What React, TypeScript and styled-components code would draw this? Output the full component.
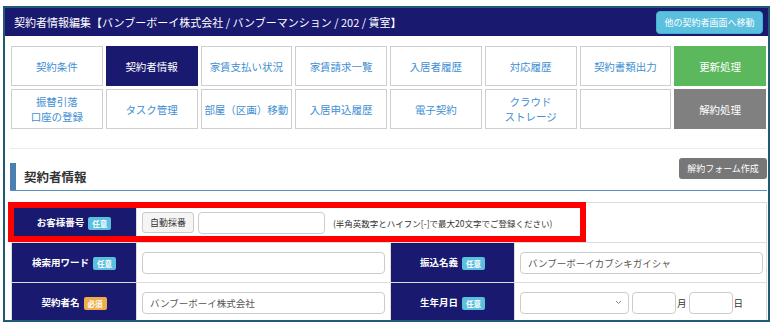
import styled, { createGlobalStyle, css } from "styled-components";

const GlobalStyle = createGlobalStyle`
    body {
        margin: 0;
        overflow: hidden;
        background: #fff;
        font-family: "Noto Sans CJK JP", "Noto Sans", sans-serif;
    }
`;

const Frame = styled.div`
    margin: 6px 0 0 3px;
    width: 767px;
    height: 316px;
    box-sizing: border-box;
    border: 2px solid #215a75;
    overflow: hidden;
    background: #fff;
`;

const Header = styled.div`
    height: 28px;
    display: flex;
    align-items: center;
    justify-content: space-between;
    padding: 0 5px 0 9px;
    background: #191970;
    color: #fff;
    font-size: 11px;
`;

const HeaderButton = styled.div`
    width: 107px;
    height: 23px;
    display: flex;
    align-items: center;
    justify-content: center;
    border-radius: 4px;
    background: #5bc0de;
    border: 1px solid #46b0d0;
    box-sizing: border-box;
    color: #fff;
    font-size: 9px;
`;

const Body = styled.div`
    padding: 10px 2px 0 6px;
`;

const TabGrid = styled.div`
    display: grid;
    grid-template-columns: repeat(8, 1fr);
    gap: 3px;
`;

type Tone = "default" | "active" | "success" | "muted" | "empty";

const Tab = styled.div<{ $tone: Tone }>`
    height: 40px;
    box-sizing: border-box;
    display: flex;
    align-items: center;
    justify-content: center;
    text-align: center;
    white-space: pre-line;
    font-size: 10.5px;
    line-height: 15px;
    border: 1px solid #cfcfcf;
    background: #fff;
    color: #3f8fd2;
    ${({ $tone }) =>
        $tone === "active" &&
        css`
            background: #191970;
            border-color: #191970;
            color: #fff;
        `}
    ${({ $tone }) =>
        $tone === "success" &&
        css`
            background: #5cb85c;
            border-color: #5cb85c;
            color: #fff;
        `}
    ${({ $tone }) =>
        $tone === "muted" &&
        css`
            background: #808080;
            border-color: #808080;
            color: #fff;
        `}
`;

const Divider = styled.div`
    margin: 19px 0 0 -1px;
    border-top: 1px solid #ebebeb;
`;

const SectionHead = styled.div`
    margin: 9px -1px 0 -1px;
    height: 32px;
    display: flex;
    justify-content: space-between;
    align-items: flex-start;
    border-bottom: 1px solid #5b8fc7;
`;

const SectionTitle = styled.h2`
    align-self: flex-end;
    margin: 0;
    height: 27px;
    display: flex;
    align-items: center;
    padding-left: 8px;
    border-left: 6px solid #4a7fb0;
    font-size: 12.5px;
    font-weight: bold;
    color: #333;
`;

const GrayButton = styled.div`
    width: 88px;
    height: 21px;
    display: flex;
    align-items: center;
    justify-content: center;
    border-radius: 3px;
    background: #777;
    color: #fff;
    font-size: 9px;
`;

const TableWrap = styled.div`
    position: relative;
    margin-top: 11px;
`;

const Table = styled.table`
    width: 755px;
    border-collapse: collapse;
    table-layout: fixed;
`;

const Row = styled.tr`
    height: 40px;
`;

const LabelCell = styled.th`
    padding: 0;
    background: #191970;
    border: 1px solid #dcdcdc;
    color: #fff;
    font-size: 9.5px;
    font-weight: bold;
    text-align: center;
`;

const ValueCell = styled.td`
    padding: 0 5px;
    border: 1px solid #dcdcdc;
    font-size: 9.5px;
    color: #333;
`;

const Badge = styled.span<{ $required?: boolean }>`
    display: inline-block;
    margin-left: 4px;
    padding: 0 4px;
    height: 13px;
    line-height: 13px;
    border-radius: 2px;
    vertical-align: middle;
    font-size: 7.5px;
    font-weight: bold;
    color: #fff;
    background: ${({ $required }) => ($required ? "#f0ad4e" : "#5bc0de")};
`;

const Inline = styled.div`
    display: flex;
    align-items: center;
`;

const SmallButton = styled.div`
    width: 52px;
    height: 21px;
    box-sizing: border-box;
    display: flex;
    align-items: center;
    justify-content: center;
    border: 1px solid #ccc;
    border-radius: 3px;
    background: #f5f5f5;
    font-size: 9px;
    color: #333;
`;

const Input = styled.div<{ $width: number }>`
    width: ${({ $width }) => $width}px;
    height: 22px;
    box-sizing: border-box;
    display: flex;
    align-items: center;
    padding: 0 7px;
    border: 1px solid #ccc;
    border-radius: 4px;
    background: #fff;
    font-size: 9.5px;
    color: #555;
`;

const Hint = styled.span`
    margin-left: 8px;
    font-size: 8.5px;
    color: #333;
`;

const SelectBox = styled(Input)`
    justify-content: flex-end;
    padding-right: 6px;
    color: #888;
`;

const Unit = styled.span`
    margin: 0 2px 0 1px;
    font-size: 9.5px;
    color: #333;
`;

const Highlight = styled.div`
    position: absolute;
    left: -3px;
    top: 0;
    width: 578px;
    height: 40px;
    box-sizing: border-box;
    border: 6px solid #ff0000;
    pointer-events: none;
`;

const tabs: { label: string; tone: Tone }[] = [
    { label: "契約条件", tone: "default" },
    { label: "契約者情報", tone: "active" },
    { label: "家賃支払い状況", tone: "default" },
    { label: "家賃請求一覧", tone: "default" },
    { label: "入居者履歴", tone: "default" },
    { label: "対応履歴", tone: "default" },
    { label: "契約書類出力", tone: "default" },
    { label: "更新処理", tone: "success" },
    { label: "振替引落\n口座の登録", tone: "default" },
    { label: "タスク管理", tone: "default" },
    { label: "部屋（区画）移動", tone: "default" },
    { label: "入居申込履歴", tone: "default" },
    { label: "電子契約", tone: "default" },
    { label: "クラウド\nストレージ", tone: "default" },
    { label: "", tone: "empty" },
    { label: "解約処理", tone: "muted" },
];

const Label = ({ text, required }: { text: string; required?: boolean }) => (
    <LabelCell>
        {text}
        <Badge $required={required}>{required ? "必須" : "任意"}</Badge>
    </LabelCell>
);

export default function App() {
    return (
        <>
            <GlobalStyle />
            <Frame>
                <Header>
                    <span>契約者情報編集【バンブーボーイ株式会社 / バンブーマンション / 202 / 賃室】</span>
                    <HeaderButton>他の契約者画面へ移動</HeaderButton>
                </Header>
                <Body>
                    <TabGrid>
                        {tabs.map((t, i) => (
                            <Tab key={i} $tone={t.tone}>
                                {t.label}
                            </Tab>
                        ))}
                    </TabGrid>
                    <Divider />
                    <SectionHead>
                        <SectionTitle>契約者情報</SectionTitle>
                        <GrayButton>解約フォーム作成</GrayButton>
                    </SectionHead>
                    <TableWrap>
                        <Table>
                            <colgroup>
                                <col style={{ width: 125 }} />
                                <col style={{ width: 254 }} />
                                <col style={{ width: 124 }} />
                                <col style={{ width: 252 }} />
                            </colgroup>
                            <tbody>
                                <Row>
                                    <Label text="お客様番号" />
                                    <ValueCell colSpan={3}>
                                        <Inline>
                                            <SmallButton>自動採番</SmallButton>
                                            <Input $width={127} style={{ marginLeft: 4 }} />
                                            <Hint>(半角英数字とハイフン[-]で最大20文字でご登録ください)</Hint>
                                        </Inline>
                                    </ValueCell>
                                </Row>
                                <Row>
                                    <Label text="検索用ワード" />
                                    <ValueCell>
                                        <Input $width={243} />
                                    </ValueCell>
                                    <Label text="振込名義" />
                                    <ValueCell>
                                        <Input $width={243}>バンブーボーイカブシキガイシャ</Input>
                                    </ValueCell>
                                </Row>
                                <Row>
                                    <Label text="契約者名" required />
                                    <ValueCell>
                                        <Input $width={243}>バンブーボーイ株式会社</Input>
                                    </ValueCell>
                                    <Label text="生年月日" />
                                    <ValueCell>
                                        <Inline>
                                            <SelectBox $width={109}>
                                                <svg width="7" height="5" viewBox="0 0 7 5">
                                                    <path d="M1 1l2.5 2.5L6 1" fill="none" stroke="#888" strokeWidth="1" />
                                                </svg>
                                            </SelectBox>
                                            <Input $width={44} style={{ marginLeft: 3 }} />
                                            <Unit>月</Unit>
                                            <Input $width={44} />
                                            <Unit>日</Unit>
                                        </Inline>
                                    </ValueCell>
                                </Row>
                            </tbody>
                        </Table>
                        <Highlight />
                    </TableWrap>
                </Body>
            </Frame>
        </>
    );
}
